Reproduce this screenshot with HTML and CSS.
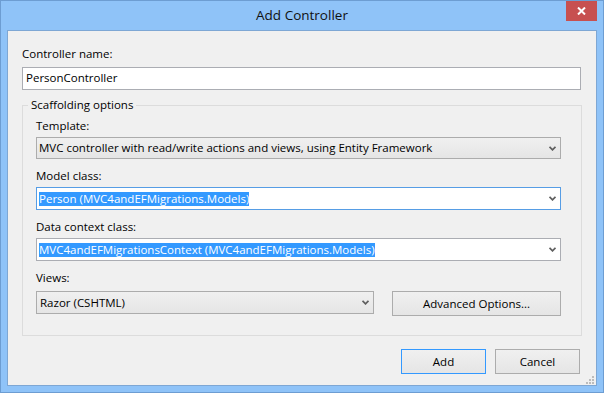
FILE: index.html
```html
<!DOCTYPE html>
<html>
<head>
<meta charset="utf-8">
<title>Add Controller</title>
<link rel="stylesheet" href="styles.css">
</head>
<body>
<div class="window">
  <div class="titlebar">
    <div class="title">Add Controller</div>
    <div class="close">
      <svg width="9" height="8" viewBox="0 0 9 8"><path d="M1 0.5 L8 7.5 M8 0.5 L1 7.5" stroke="#fff" stroke-width="2" fill="none"/></svg>
    </div>
  </div>
  <div class="client">
    <div class="lbl">Controller name:</div>
    <div class="textbox">PersonController</div>
    <div class="group">
      <span class="legend">Scaffolding options</span>
      <div class="field">
        <div class="lbl lbl-tight">Template:</div>
        <div class="combo combo-list combo-short">
          <span class="combo-text">MVC controller with read/write actions and views, using Entity Framework</span>
          <svg class="chev" width="7" height="5" viewBox="0 0 7 5"><path d="M0.5 0.8 L3.5 3.8 L6.5 0.8" stroke="#5f5f5f" stroke-width="1.8" fill="none"/></svg>
        </div>
      </div>
      <div class="field">
        <div class="lbl lbl-tight">Model class:</div>
        <div class="combo combo-edit combo-focus">
          <span class="combo-text"><span class="sel">Person (MVC4andEFMigrations.Models)</span></span>
          <svg class="chev" width="7" height="5" viewBox="0 0 7 5"><path d="M0.5 0.8 L3.5 3.8 L6.5 0.8" stroke="#5f5f5f" stroke-width="1.8" fill="none"/></svg>
        </div>
      </div>
      <div class="field">
        <div class="lbl lbl-tight">Data context class:</div>
        <div class="combo combo-edit">
          <span class="combo-text"><span class="sel">MVC4andEFMigrationsContext (MVC4andEFMigrations.Models)</span></span>
          <svg class="chev" width="7" height="5" viewBox="0 0 7 5"><path d="M0.5 0.8 L3.5 3.8 L6.5 0.8" stroke="#5f5f5f" stroke-width="1.8" fill="none"/></svg>
        </div>
      </div>
      <div class="field">
        <div class="lbl lbl-views">Views:</div>
        <div class="views-row">
          <div class="combo combo-list combo-views">
            <span class="combo-text combo-text-views">Razor (CSHTML)</span>
            <svg class="chev" width="7" height="5" viewBox="0 0 7 5"><path d="M0.5 0.8 L3.5 3.8 L6.5 0.8" stroke="#5f5f5f" stroke-width="1.8" fill="none"/></svg>
          </div>
          <div class="btn btn-adv">Advanced Options...</div>
        </div>
      </div>
    </div>
    <div class="buttons">
      <div class="btn btn-default">Add</div>
      <div class="btn">Cancel</div>
    </div>
    <svg class="grip" width="8" height="8" viewBox="0 0 8 8">
      <rect x="6" y="0" width="2" height="2" fill="#bcbcbc"/>
      <rect x="3" y="3" width="2" height="2" fill="#bcbcbc"/>
      <rect x="6" y="3" width="2" height="2" fill="#bcbcbc"/>
      <rect x="0" y="6" width="2" height="2" fill="#bcbcbc"/>
      <rect x="3" y="6" width="2" height="2" fill="#bcbcbc"/>
      <rect x="6" y="6" width="2" height="2" fill="#bcbcbc"/>
    </svg>
  </div>
</div>
</body>
</html>
```
FILE: styles.css
```css
html, body {
  margin: 0;
  padding: 0;
}
body {
  width: 604px;
  height: 393px;
  overflow: hidden;
  font-family: "Open Sans", "Noto Sans", sans-serif;
  font-size: 11.5px;
  color: #000;
}
.window {
  box-sizing: border-box;
  width: 604px;
  height: 393px;
  border: 1px solid #6d9dd2;
  background: #8fc3f8;
  padding: 0 6px 6px;
  display: flex;
  flex-direction: column;
}
.titlebar {
  height: 29px;
  flex: none;
  display: grid;
  grid-template-columns: 1fr auto 1fr;
  align-items: start;
}
.title {
  grid-column: 2;
  font-size: 13.5px;
  line-height: 29px;
  color: #111;
}
.close {
  grid-column: 3;
  justify-self: end;
  width: 31px;
  height: 20px;
  background: #c75050;
  display: flex;
  align-items: center;
  justify-content: center;
}
.client {
  flex: 1;
  position: relative;
  border: 1px solid #7ea7d4;
  background: #f0f0f0;
  padding: 15px 14px 0;
}
.lbl {
  height: 16px;
  line-height: 16px;
  white-space: nowrap;
}
.textbox {
  box-sizing: border-box;
  width: 559px;
  height: 23px;
  margin-top: 5px;
  border: 1px solid #abadb3;
  background: #fff;
  padding-left: 3px;
  line-height: 20px;
}
.group {
  position: relative;
  box-sizing: border-box;
  width: 560px;
  margin-top: 15px;
  border: 1px solid #dcdcdc;
  padding: 12px 20px 19px 13px;
}
.legend {
  position: absolute;
  top: -9px;
  left: 5px;
  padding: 0 3px;
  line-height: 16px;
  background: #f0f0f0;
}
.field + .field {
  margin-top: 9px;
}
.lbl-tight {
  margin-bottom: 3px;
}
.lbl-views {
  margin-bottom: 5px;
}
.combo {
  box-sizing: border-box;
  height: 23px;
  display: flex;
  align-items: center;
  padding: 0 4px 0 2px;
}
.combo-short {
  height: 22px;
}
.combo-list {
  border: 1px solid #acacac;
  background: linear-gradient(#f0f0f0, #e5e5e5);
}
.combo-edit {
  border: 1px solid #abadb3;
  background: #fff;
}
.combo-focus {
  border-color: #569de5;
}
.combo-text {
  flex: 1;
  white-space: nowrap;
  overflow: hidden;
  line-height: 16px;
}
.combo-text-views {
  padding-left: 1px;
}
.sel {
  display: inline-block;
  background: #3399ff;
  color: #fff;
  line-height: 14px;
}
.chev {
  flex: none;
  display: block;
}
.views-row {
  display: flex;
  gap: 18px;
  align-items: flex-start;
}
.combo-views {
  width: 338px;
}
.btn {
  box-sizing: border-box;
  width: 85px;
  height: 25px;
  border: 1px solid #acacac;
  background: linear-gradient(#f0f0f0, #e5e5e5);
  text-align: center;
  line-height: 23px;
}
.btn-adv {
  width: 169px;
}
.btn-default {
  border-color: #3399ff;
}
.buttons {
  width: 560px;
  box-sizing: border-box;
  display: flex;
  justify-content: flex-end;
  gap: 9px;
  margin-top: 13px;
  padding-right: 2px;
}
.grip {
  position: absolute;
  right: 2px;
  bottom: 1px;
}
```
